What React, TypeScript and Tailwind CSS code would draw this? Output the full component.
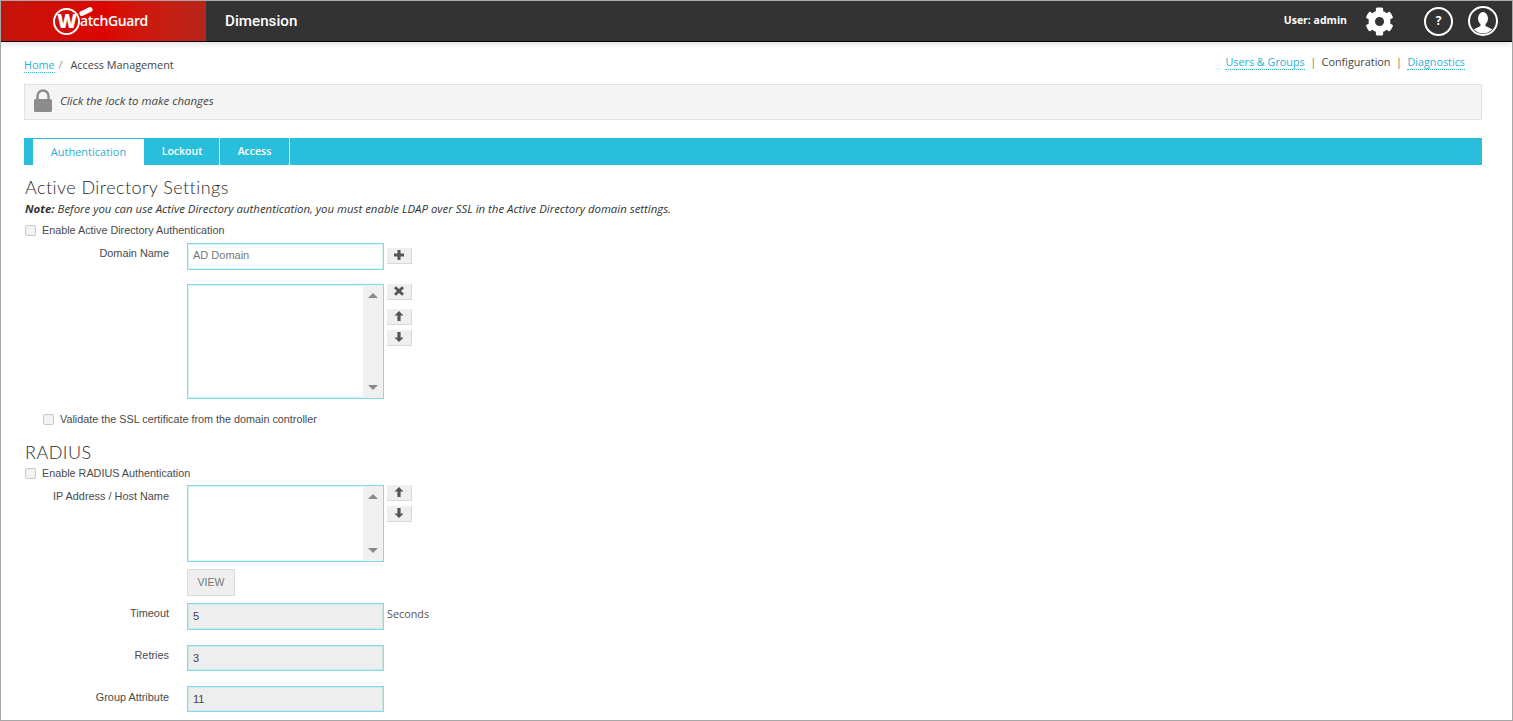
import { FaCog } from 'react-icons/fa';

const openSans = "font-['Open_Sans',sans-serif]";
const arial = "font-['Liberation_Sans',Arial,sans-serif]";
const fieldBorder = 'border border-[#85d9e8] shadow-[inset_0_0_0_1px_rgba(133,217,232,0.3)]';

function Glyph({ d }: { d: string }) {
  return (
    <svg viewBox="0 0 12 12" className="h-[12px] w-[12px] fill-[#555]" aria-hidden="true">
      <path d={d} />
    </svg>
  );
}

const PLUS = 'M4.5 1h3v3.5H11v3H7.5V11h-3V7.5H1v-3h3.5z';
const CROSS = 'M3 1.2 6 4l3-2.8L11 3.2 8 6l3 2.8L9 10.8 6 8l-3 2.8L1 8.8 4 6 1 3.2z';
const UP = 'M6 1 10.5 5.6H7.6V11H4.4V5.6H1.5z';
const DOWN = 'M6 11 1.5 6.4H4.4V1H7.6V6.4H10.5z';

function IconButton({ d, className = '' }: { d: string; className?: string }) {
  return (
    <button type="button" className={`flex h-[16px] w-[25px] items-center justify-center border-b border-r border-[#d8d8d8] bg-[#efefef] pb-[2px] ${className}`}>
      <Glyph d={d} />
    </button>
  );
}

function Check({ label, className = '' }: { label: string; className?: string }) {
  return (
    <label className={`flex items-center text-[10.8px] leading-[14px] text-[#4a4a4a] ${arial} ${className}`}>
      <span className="mr-[6px] h-[11px] w-[11px] rounded-[2px] border border-[#c8c8c8] bg-[#f3f3f3]" />
      {label}
    </label>
  );
}

function Listbox({ height }: { height: string }) {
  return (
    <div className={`flex w-[197px] bg-white ${fieldBorder} ${height}`}>
      <div className="flex-1" />
      <div className="flex w-[20px] flex-col items-center justify-between bg-[#f0f0f0] py-[8px]">
        <span className="h-0 w-0 border-x-[5px] border-b-[5px] border-x-transparent border-b-[#8a8a8a]" />
        <span className="h-0 w-0 border-x-[5px] border-t-[5px] border-x-transparent border-t-[#8a8a8a]" />
      </div>
    </div>
  );
}

function Label({ children }: { children: string }) {
  return <div className={`w-[145px] shrink-0 text-right text-[10.9px] leading-[14px] text-[#4a4a4a] ${arial}`}>{children}</div>;
}

function ReadOnly({ label, value, suffix, className = '', height = 'h-[27px]', labelPad = 'pt-[3px]' }: { label: string; value: string; suffix?: string; className?: string; height?: string; labelPad?: string }) {
  return (
    <div className={`flex ${className}`}>
      <div className={labelPad}><Label>{label}</Label></div>
      <div className={`ml-[18px] flex w-[197px] items-center bg-[#eeeeee] pl-[5px] text-[11px] text-[#444] ${fieldBorder} ${height} ${arial}`}>{value}</div>
      {suffix && <span className={`ml-[3px] pt-[3px] text-[10.8px] leading-[16px] text-[#555] ${openSans}`}>{suffix}</span>}
    </div>
  );
}

function Logo() {
  return (
    <div className={`relative flex h-[40px] w-[205px] shrink-0 items-center bg-gradient-to-r from-[#c4140c] via-[#dc0500] to-[#b8251a] pl-[52px] text-white ${openSans}`}>
      <span className="flex h-[27px] w-[27px] shrink-0 items-center justify-center rounded-full border-[2px] border-white text-[19px] font-extrabold leading-none tracking-[-1px]">W</span>
      <span className="text-[14px] font-semibold leading-none tracking-[-0.4px]">atchGuard</span>
      <span className="absolute left-[78px] top-[8px] h-[5px] w-[14px] -rotate-[25deg] rounded-full bg-white" />
    </div>
  );
}

function UserIcon() {
  return (
    <svg viewBox="0 0 30 30" className="h-[30px] w-[30px]" aria-hidden="true">
      <defs>
        <clipPath id="userClip"><circle cx="15" cy="15" r="12.5" /></clipPath>
      </defs>
      <circle cx="15" cy="15" r="14" fill="none" stroke="#fff" strokeWidth="2" />
      <g clipPath="url(#userClip)" fill="#fff">
        <ellipse cx="15" cy="12.5" rx="5" ry="6.5" />
        <path d="M12.5 17.5h5v2.5l7 3.5 2 6.5H3.5l2-6.5 7-3.5z" />
      </g>
    </svg>
  );
}

function Lock() {
  return (
    <svg viewBox="0 0 20 24" className="h-[24px] w-[20px]" aria-hidden="true">
      <path d="M4.5 11V7a5.5 5.5 0 0 1 11 0v4" fill="none" stroke="#8c8c8c" strokeWidth="2.4" />
      <rect x="1" y="10" width="18" height="13" rx="1.5" fill="#8c8c8c" />
    </svg>
  );
}

const headingClass = "pl-[1px] font-['Lato',sans-serif] text-[18px] font-light leading-[22px] tracking-[0.45px] text-[#2b2b2b]";

export default function App() {
  return (
    <div className={`h-[721px] w-[1513px] overflow-hidden border border-[#a8a8a8] bg-white ${openSans}`}>
      <header className="flex h-[41px] border-b-[1px] border-black bg-[#333333] text-white shadow-[0_2px_6px_rgba(0,0,0,0.12)]">
        <Logo />
        <div className="flex flex-1 items-center justify-between pl-[19px]">
          <span className="font-['Roboto',sans-serif] text-[15.2px] font-medium">Dimension</span>
          <div className="flex items-center">
            <span className="text-[10.5px] font-bold">User: admin</span>
            <FaCog className="ml-[18px] h-[29px] w-[29px]" />
            <span className="ml-[30px] flex h-[29px] w-[29px] items-center justify-center rounded-full border-2 border-white text-[12px] font-bold">?</span>
            <span className="ml-[15px] mr-[-1px] flex w-[45px]"><UserIcon /></span>
          </div>
        </div>
      </header>

      <main className="px-[23px]">
        <div className="flex h-[42px] items-start justify-between">
          <nav className="pt-[15px] text-[10.8px] leading-[15px] text-[#444]">
            <a className="border-b border-dotted border-[#29bedb] text-[#29afd3]">Home</a>
            <span className="ml-[4px] mr-[8px] text-[#999]">/</span>
            <span>Access Management</span>
          </nav>
          <div className="mr-[24px] pt-[12px] text-[10.8px] leading-[15px] text-[#444]">
            <a className="border-b border-dotted border-[#29bedb] text-[#29afd3]">Users &amp; Groups</a>
            <span className="mx-[5.5px] text-[#777]">|</span>
            <span>Configuration</span>
            <span className="mx-[5.5px] text-[#8a6d3b]">|</span>
            <a className="border-b border-dotted border-[#29bedb] text-[#29afd3]">Diagnostics</a>
          </div>
        </div>

        <div className="flex h-[36px] w-[1458px] items-center border border-[#e2e2e2] bg-[#f5f5f5] pb-[2px] pl-[8px]">
          <Lock />
          <span className="ml-[7px] text-[11.45px] italic text-[#444]">Click the lock to make changes</span>
        </div>

        <div className="mt-[18px] flex h-[27px] w-[1458px] bg-[#29bedb] pl-[9px] text-[11px]">
          <span className="flex w-[111px] items-center justify-center border-t border-[#29bedb] bg-white text-[#29afd3]">Authentication</span>
          <span className="ml-px flex w-[75px] items-center justify-center border-r border-white text-[10.5px] font-semibold text-white">Lockout</span>
          <span className="flex w-[70px] items-center justify-center border-r border-white text-[10.5px] font-semibold text-white">Access</span>
        </div>

        <h2 className={`mt-[11px] ${headingClass}`}>Active Directory Settings</h2>
        <p className="mt-[3px] pl-[1px] text-[11.42px] italic leading-[15px] text-[#333]"><b>Note:</b> Before you can use Active Directory authentication, you must enable LDAP over SSL in the Active Directory domain settings.</p>
        <Check label="Enable Active Directory Authentication" className="mt-[7px] pl-[1px]" />

        <div className="mt-[6px] flex">
          <div className="pt-[3px]"><Label>Domain Name</Label></div>
          <div className={`ml-[18px] flex h-[27px] w-[197px] items-center bg-white pb-[2px] pl-[5px] text-[11px] text-[#777] ${fieldBorder} ${arial}`}>AD Domain</div>
          <IconButton d={PLUS} className="ml-[3px] mt-[5px]" />
        </div>

        <div className="mt-[14px] flex pl-[163px]">
          <Listbox height="h-[115px]" />
          <div className="ml-[3px] flex flex-col">
            <IconButton d={CROSS} />
            <IconButton d={UP} className="mt-[9px]" />
            <IconButton d={DOWN} className="mt-[5px]" />
          </div>
        </div>

        <Check label="Validate the SSL certificate from the domain controller" className="mt-[13px] pl-[19px]" />

        <h2 className={`mt-[15px] ${headingClass}`}>RADIUS</h2>
        <Check label="Enable RADIUS Authentication" className="mt-[3px] pl-[1px]" />

        <div className="mt-[5px] flex">
          <div className="pt-[4px]"><Label>IP Address / Host Name</Label></div>
          <div className="ml-[18px]"><Listbox height="h-[77px]" /></div>
          <div className="ml-[3px] flex flex-col">
            <IconButton d={UP} />
            <IconButton d={DOWN} className="mt-[5px]" />
          </div>
        </div>

        <button type="button" className={`ml-[163px] mt-[7px] block h-[27px] w-[48px] border border-[#dcdcdc] bg-[#efefef] text-[10.5px] text-[#777] ${arial}`}>VIEW</button>

        <ReadOnly label="Timeout" value="5" suffix="Seconds" className="mt-[7px]" />
        <ReadOnly label="Retries" value="3" className="mt-[15px]" height="h-[26px]" />
        <ReadOnly label="Group Attribute" value="11" className="mt-[15px]" height="h-[26px]" labelPad="pt-[4px]" />
      </main>
    </div>
  );
}
